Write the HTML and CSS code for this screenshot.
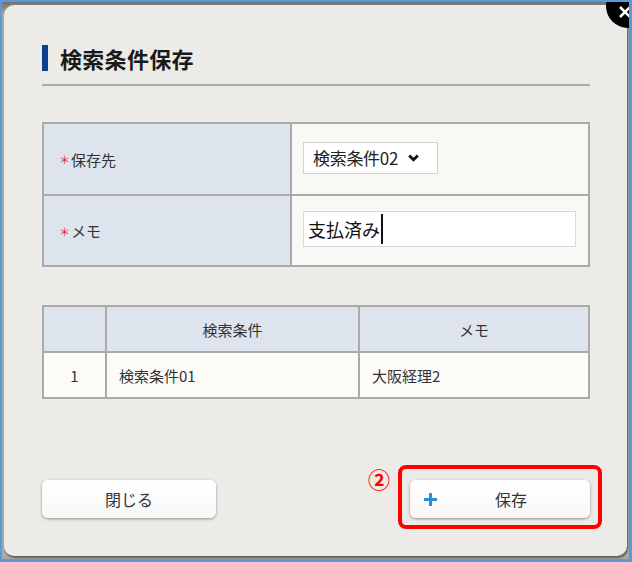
FILE: index.html
```html
<!DOCTYPE html>
<html lang="ja">
<head>
<meta charset="utf-8">
<title>検索条件保存</title>
<link rel="stylesheet" href="styles.css">
</head>
<body>
<div class="frame">
  <div class="dialog">
    <div class="title">
      <span class="title-bar"></span>
      <h1 class="title-text">検索条件保存</h1>
    </div>
    <div class="rule"></div>

    <div class="form">
      <div class="form-label"><span class="req">＊</span>保存先</div>
      <div class="form-value">
        <div class="select">
          <span class="select-text">検索条件02</span>
          <svg class="chev" width="11" height="8" viewBox="0 0 11 8"><path d="M1.2 1.5 L5.5 5.8 L9.8 1.5" fill="none" stroke="#111" stroke-width="2.8"/></svg>
        </div>
      </div>
      <div class="form-label row2"><span class="req">＊</span>メモ</div>
      <div class="form-value row2">
        <div class="input"><span class="input-text">支払済み</span><span class="caret"></span></div>
      </div>
    </div>

    <div class="list">
      <div class="lh">&nbsp;</div>
      <div class="lh">検索条件</div>
      <div class="lh">メモ</div>
      <div class="ld center">1</div>
      <div class="ld">検索条件01</div>
      <div class="ld">大阪経理2</div>
    </div>

    <div class="buttons">
      <button class="btn btn-close">閉じる</button>
      <button class="btn btn-save">
        <svg class="plus" width="15" height="15" viewBox="0 0 15 15"><path d="M7.5 1 V14 M1 7.5 H14" stroke="#2b8ed8" stroke-width="3"/></svg>
        <span class="btn-save-text">保存</span>
      </button>
    </div>

    <div class="mark">②</div>
    <div class="highlight"></div>
  </div>
  <div class="close-btn">
    <svg class="close-x" width="14" height="14" viewBox="0 0 14 14"><path d="M2 2 L12 12 M12 2 L2 12" stroke="#fff" stroke-width="2.6"/></svg>
  </div>
</div>
</body>
</html>
```

FILE: styles.css
```css
html, body {
  margin: 0;
  padding: 0;
  background: #5b9bd5;
}
body {
  font-family: "Noto Sans CJK JP", "Noto Sans", sans-serif;
  color: #333;
}
.frame {
  position: relative;
  width: 632px;
  height: 562px;
  box-sizing: border-box;
  border-style: solid;
  border-color: #5b9bd5;
  border-width: 2px 3px 3px 2px;
  background: linear-gradient(#6f6f6f, #a9a9a9 12px, #a9a9a9);
  overflow: hidden;
  padding: 3px 0 0 2px;
}
.dialog {
  position: relative;
  width: 623px;
  height: 551px;
  box-sizing: border-box;
  background: #edebe7;
  border-radius: 10px;
  box-shadow: 1px 2px 2px rgba(0, 0, 0, 0.45);
  padding: 40px 37px 0 38px;
}
.title {
  display: flex;
  align-items: center;
  height: 26px;
}
.title-bar {
  width: 6px;
  height: 26px;
  background: #0b3e8c;
}
.title-text {
  margin: 0 0 0 12px;
  font-size: 22px;
  font-weight: bold;
  color: #1a1a1a;
  line-height: 26px;
  letter-spacing: 0.3px;
}
.rule {
  margin-top: 13px;
  height: 2px;
  background: #a9a9a7;
}
.form {
  margin-top: 36px;
  display: grid;
  grid-template-columns: 246px 1fr;
  grid-template-rows: 70px 69px;
  border: 2px solid #aaaaaa;
  background: #aaaaaa;
  column-gap: 2px;
  row-gap: 2px;
}
.form-label {
  background: #dee4ee;
  display: flex;
  align-items: center;
  padding-left: 15px;
  font-size: 15px;
  color: #333;
}
.req {
  color: #e8191b;
  font-size: 11px;
  margin-right: 1px;
}
.form-value {
  background: #f9f8f4;
  display: flex;
  align-items: center;
  padding-left: 11px;
}
.select {
  width: 135px;
  height: 32px;
  box-sizing: border-box;
  border: 1px solid #d2d2d2;
  background: #fff;
  display: flex;
  align-items: center;
  padding-left: 9px;
  margin-top: -3px;
}
.select-text {
  font-size: 17px;
  color: #222;
  letter-spacing: -0.3px;
}
.chev {
  margin-left: 10px;
}
.input {
  width: 273px;
  height: 36px;
  box-sizing: border-box;
  border: 1px solid #d8d8d8;
  background: #fff;
  display: flex;
  align-items: center;
  padding-left: 4px;
  margin-top: -4px;
}
.input-text {
  font-size: 18px;
  color: #111;
}
.caret {
  width: 2px;
  height: 30px;
  background: #111;
  margin-left: 1px;
}
.list {
  margin-top: 38px;
  display: grid;
  grid-template-columns: 61px 251px 1fr;
  grid-template-rows: 44px 44px;
  border: 2px solid #aaaaaa;
  background: #aaaaaa;
  gap: 2px;
}
.lh {
  background: #dee4ee;
  display: flex;
  align-items: center;
  justify-content: center;
  font-size: 15px;
  color: #333;
}
.ld {
  background: #fcfbf7;
  display: flex;
  align-items: center;
  padding-left: 12px;
  font-size: 15px;
  color: #333;
}
.ld.center {
  justify-content: center;
  padding-left: 0;
}
.buttons {
  margin-top: 81px;
  display: flex;
  justify-content: space-between;
}
.btn {
  height: 38px;
  border: none;
  border-radius: 6px;
  background: linear-gradient(#ffffff, #f7f7f7);
  box-shadow: 0 1px 3px rgba(0, 0, 0, 0.4);
  font-family: "Noto Sans CJK JP", "Noto Sans", sans-serif;
  font-size: 16px;
  color: #333;
  padding: 0;
}
.btn-close {
  width: 174px;
}
.btn-save {
  width: 180px;
  display: flex;
  align-items: center;
  padding-left: 13px;
}
.btn-save-text {
  margin-left: 57px;
}
.mark {
  position: absolute;
  left: 364px;
  top: 460px;
  font-size: 22px;
  font-weight: bold;
  color: #ff0000;
  line-height: 26px;
}
.highlight {
  position: absolute;
  left: 394px;
  top: 460px;
  width: 204px;
  height: 64px;
  box-sizing: border-box;
  border: 4px solid #ff0000;
  border-radius: 8px;
}
.close-btn {
  position: absolute;
  left: 604px;
  top: -18px;
  width: 44px;
  height: 44px;
  border-radius: 50%;
  background: #000;
}
.close-x {
  position: absolute;
  left: 12px;
  top: 21px;
}
```
